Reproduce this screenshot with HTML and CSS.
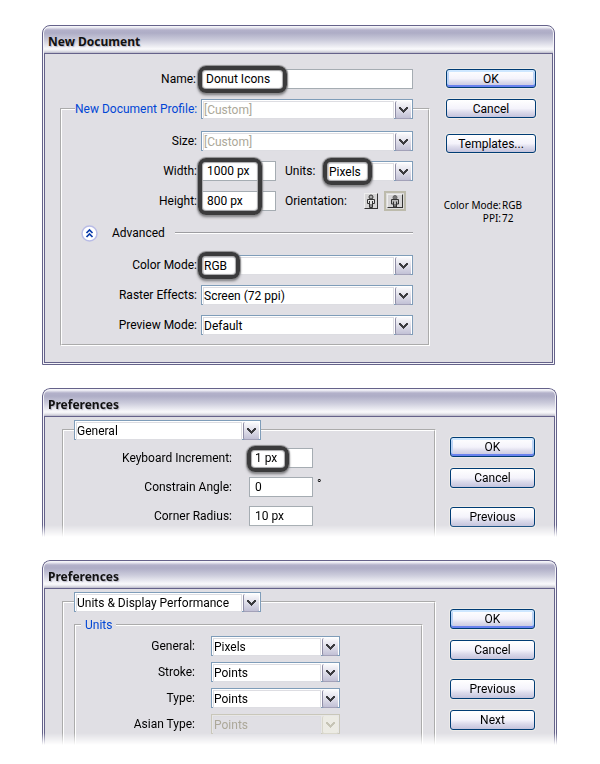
FILE: index.html
```html
<!DOCTYPE html>
<html lang="en">
<head>
<meta charset="utf-8">
<title>Document settings</title>
<link rel="stylesheet" href="styles.css">
</head>
<body>
<svg class="defs" aria-hidden="true">
  <symbol id="chevron" viewBox="0 0 9 6"><path d="M0 0h2v1h1v1h1v1h1V2h1V1h1V0h2v2H8v1H7v1H6v1H5v1H4V5H3V4H2V3H1V2H0z"/></symbol>
</svg>

<section class="window window-new">
  <h2 class="title">New Document</h2>
  <form class="body">
    <div class="main">
      <div class="row row-name">
        <label for="name">Name:</label>
        <span class="field grow"><input id="name" type="text" value="Donut Icons"><i class="ring ring-name"></i></span>
      </div>
      <fieldset class="group group-profile">
        <legend>
          <span class="row">
            <label class="blue" for="profile">New Document Profile:</label>
            <span class="combo grow dim"><select id="profile"><option>[Custom]</option></select><span class="drop"><svg><use href="#chevron"/></svg></span></span>
          </span>
        </legend>
        <div class="row">
          <label for="size">Size:</label>
          <span class="combo grow dim"><select id="size"><option>[Custom]</option></select><span class="drop"><svg><use href="#chevron"/></svg></span></span>
        </div>
        <div class="row">
          <label for="width">Width:</label>
          <span class="field small"><input id="width" type="text" value="1000 px"><i class="ring ring-size"></i></span>
          <label class="side" for="units">Units:</label>
          <span class="combo grow"><select id="units"><option>Pixels</option></select><span class="drop"><svg><use href="#chevron"/></svg></span><i class="ring ring-units"></i></span>
        </div>
        <div class="row">
          <label for="height">Height:</label>
          <span class="field small"><input id="height" type="text" value="800 px"></span>
          <span class="side orient">Orientation:</span>
          <button type="button" class="page" aria-label="Portrait">
            <svg viewBox="0 0 12 14"><circle cx="6" cy="3" r="2" fill="#aaa" stroke="#333"/><path d="M2.500 5.500h7v4h-2v4h-3v-4h-2z" fill="#e4e4e4" stroke="#333"/><path d="M4.500 7v3M7.500 7v3M6 10v3" stroke="#333"/></svg>
          </button>
          <button type="button" class="page wide" aria-label="Landscape">
            <svg viewBox="0 0 14 12"><circle cx="7" cy="2.500" r="2" fill="#777" stroke="#666"/><path d="M3.500 9V4.500h7V9h-2v3h-3V9z" fill="#bbb" stroke="#333"/><path d="M5.500 6.500v3M8.500 6.500v3M7 9v3" stroke="#333"/></svg>
          </button>
        </div>
        <div class="advanced">
          <button type="button" class="toggle" aria-label="Collapse advanced">
            <svg viewBox="0 0 17 17"><circle cx="8.500" cy="8.500" r="7.500" fill="#fff" stroke="#b9bce6" stroke-width="1.500"/><path d="M5.500 8l3-3 3 3M5.500 12l3-3 3 3" fill="none" stroke="#0a3cab" stroke-width="1.700"/></svg>
          </button>
          <span>Advanced</span>
          <hr>
        </div>
        <div class="row">
          <label for="color">Color Mode:</label>
          <span class="combo grow"><select id="color"><option>RGB</option></select><span class="drop"><svg><use href="#chevron"/></svg></span><i class="ring ring-rgb"></i></span>
        </div>
        <div class="row">
          <label for="raster">Raster Effects:</label>
          <span class="combo grow"><select id="raster"><option>Screen (72 ppi)</option></select><span class="drop"><svg><use href="#chevron"/></svg></span></span>
        </div>
        <div class="row">
          <label for="preview">Preview Mode:</label>
          <span class="combo grow"><select id="preview"><option>Default</option></select><span class="drop"><svg><use href="#chevron"/></svg></span></span>
        </div>
      </fieldset>
    </div>
    <div class="actions">
      <button type="button" class="btn primary">OK</button>
      <button type="button" class="btn">Cancel</button>
      <button type="button" class="btn apart">Templates...</button>
      <dl class="info">
        <dt>Color Mode:</dt><dd>RGB</dd>
        <dt>PPI:</dt><dd>72</dd>
      </dl>
    </div>
  </form>
</section>

<section class="window cut">
  <h2 class="title">Preferences</h2>
  <form class="body">
    <fieldset class="group open">
      <legend>
        <span class="combo section"><select aria-label="Section"><option>General</option></select><span class="drop"><svg><use href="#chevron"/></svg></span></span>
      </legend>
      <div class="row">
        <label for="key">Keyboard Increment:</label>
        <span class="field short"><input id="key" type="text" value="1 px"><i class="ring ring-key"></i></span>
      </div>
      <div class="row">
        <label for="angle">Constrain Angle:</label>
        <span class="field short"><input id="angle" type="text" value="0"></span>
        <span class="degree">°</span>
      </div>
      <div class="row">
        <label for="radius">Corner Radius:</label>
        <span class="field short"><input id="radius" type="text" value="10 px"></span>
      </div>
    </fieldset>
    <div class="actions">
      <button type="button" class="btn primary">OK</button>
      <button type="button" class="btn">Cancel</button>
      <button type="button" class="btn apart">Previous</button>
    </div>
  </form>
</section>

<section class="window cut">
  <h2 class="title">Preferences</h2>
  <form class="body">
    <fieldset class="group open">
      <legend>
        <span class="combo section"><select aria-label="Section"><option>Units &amp; Display Performance</option></select><span class="drop"><svg><use href="#chevron"/></svg></span></span>
      </legend>
      <fieldset class="group open units">
        <legend class="blue">Units</legend>
        <div class="row">
          <label for="general">General:</label>
          <span class="combo unit"><select id="general"><option>Pixels</option></select><span class="drop"><svg><use href="#chevron"/></svg></span></span>
        </div>
        <div class="row">
          <label for="stroke">Stroke:</label>
          <span class="combo unit"><select id="stroke"><option>Points</option></select><span class="drop"><svg><use href="#chevron"/></svg></span></span>
        </div>
        <div class="row">
          <label for="type">Type:</label>
          <span class="combo unit"><select id="type"><option>Points</option></select><span class="drop"><svg><use href="#chevron"/></svg></span></span>
        </div>
        <div class="row">
          <label for="asian">Asian Type:</label>
          <span class="combo unit off"><select id="asian" disabled><option>Points</option></select><span class="drop"><svg><use href="#chevron"/></svg></span></span>
        </div>
      </fieldset>
    </fieldset>
    <div class="actions">
      <button type="button" class="btn primary">OK</button>
      <button type="button" class="btn">Cancel</button>
      <button type="button" class="btn apart">Previous</button>
      <button type="button" class="btn">Next</button>
    </div>
  </form>
</section>
</body>
</html>
```
FILE: styles.css
```css
* { box-sizing: border-box; }

body {
  margin: 0;
  padding: 25px 43px 17px 42px;
  background: #fff;
  color: #000;
  font: 12px/16px Roboto, "Noto Sans", sans-serif;
}

input, select, button { font: inherit; color: inherit; margin: 0; }
.defs { position: absolute; width: 0; height: 0; }

/* Window frame */
.window {
  border: 1px solid #65628a;
  border-radius: 8px 8px 0 0;
  padding: 1px;
  background: #f4f4f8;
  margin-bottom: 23px;
}
.window-new { margin-right: 2px; }
.cut {
  border-bottom: 0;
  padding-bottom: 0;
  mask-image: linear-gradient(to top, transparent, #000 12px);
}
.title {
  margin: 0;
  height: 27px;
  padding: 7px 4px 0;
  border-bottom: 1px solid #65628a;
  border-radius: 6px 6px 0 0;
  background: linear-gradient(#f4f4f9 0, #b3b1ca 3px, #aeadc6 6px, #cbcbdb 13px, #fafafc 22px, #e4e4ea 24px, #b9b8c8 26px);
  color: #111;
  font: bold 12px/16px "Noto Sans", sans-serif;
  text-shadow: 1px 1px 1px #b9b8c8;
}
.body {
  display: flex;
  border: 1px solid #65628a;
  border-top: 0;
  background: #e0dfe4;
}
.window-new .body { padding: 15px 16px 16px 15px; gap: 16px; }
.cut .body { border-bottom: 0; padding: 3px 19px 0 17px; gap: 14px; }
.main { flex: 1; }

/* Groups and rows */
.group {
  flex: 1;
  min-width: 0;
  margin: 0;
  padding: 0;
  border: 2px groove #fff;
}
.group legend { padding: 0; }
.row { display: flex; align-items: center; height: 20px; }
.row label { flex: none; text-align: right; white-space: nowrap; }
.row > label:first-child { width: 139px; padding-right: 4px; }
.grow { flex: 1; }
.blue { color: #0046d5; }

.row-name { margin: 0 17px 10px 1px; }
.group-profile { padding: 12px 15px 9px 0; }
.group-profile legend { margin-left: 13px; width: calc(100% - 13px); }
.group-profile legend .row > label:first-child { width: 126px; }
.group-profile > .row + .row { margin-top: 10px; }
.row .side { width: 50px; padding-left: 9px; text-align: left; }
.row .orient { width: 88px; white-space: nowrap; }

.advanced { display: flex; align-items: center; height: 44px; padding-left: 19px; }
.advanced span { margin: 0 10px 0 14px; }
.advanced hr { flex: 1; margin: 0; border: 0; border-top: 1px solid #9d9da1; border-bottom: 1px solid #fff; }

/* Text fields */
.field { position: relative; display: flex; height: 20px; }
.field input {
  width: 100%;
  min-width: 0;
  padding: 0 5px;
  border: 1px solid #a5acb2;
  border-radius: 0;
  background: #fff;
}
.small { width: 75px; }
.short { width: 64px; }

/* Drop-downs */
.combo {
  position: relative;
  display: grid;
  height: 20px;
  padding: 1px;
  border: 1px solid #7f9db9;
  background: #fff;
}
.combo select, .drop { grid-area: 1 / 1; }
.combo select {
  appearance: none;
  min-width: 0;
  margin-right: 17px;
  padding: 0;
  border: 1px solid #dddde2;
  border-radius: 0;
  background: #fff;
}
.dim select { color: #aca899; }
.drop {
  justify-self: end;
  display: grid;
  place-items: center;
  width: 16px;
  border-left: 1px solid #8f8da6;
  border-bottom: 1px solid #a3a1b8;
  border-radius: 2px;
  background: linear-gradient(#fbfbfd, #e2e1eb 45%, #c2c1d6);
  pointer-events: none;
}
.drop svg { width: 9px; height: 6px; fill: #3b3b3f; }
.off { border-color: #c9c7ba; background: #e8e7e6; }
.off select { background: #e0dfe4; color: #aca899; opacity: 1; }
.off .drop { background: #ecebe4; border-color: #d8d6ca; }
.off .drop svg { fill: #c6c4b5; }

/* Emphasis rings over fields */
.ring {
  position: absolute;
  z-index: 1;
  border: 4px solid #3b3b3c;
  border-radius: 8px;
  box-shadow: 0 0 1px 1px #8c8c8e, inset 0 0 1px 1px #a8a8aa, 0 2px 3px #77777a;
  pointer-events: none;
}
.ring-name { left: -2px; top: -3px; width: 89px; height: 27px; }
.ring-size { left: -3px; top: -3px; width: 64px; height: 57px; }
.ring-units { left: -4px; top: -4px; width: 49px; height: 27px; }
.ring-rgb { left: -4px; top: -4px; width: 42px; height: 27px; }
.ring-key { left: -2px; top: -2px; width: 42px; height: 26px; }

/* Buttons */
.actions { display: flex; flex-direction: column; gap: 11px; width: 90px; }
.btn {
  height: 20px;
  padding: 0;
  border: 1px solid #003c74;
  border-radius: 3px;
  background: linear-gradient(#fff, #f4f3fb 50%, #dddcec 70%, #c4c3dc);
  box-shadow: 0 0 0 1px #eceae8;
  line-height: 16px;
}
.primary { box-shadow: 0 0 0 1px #eceae8, inset 0 2px #cee7ff, inset 0 -2px #6982ee, inset 2px 0 #bcd4f6, inset -2px 0 #bcd4f6; }
.window-new .btn { height: 19px; }
.window-new .apart { margin-top: 5px; }
.cut .actions { width: 85px; padding-top: 17px; }
.cut .apart { margin-top: 8px; }

.toggle { width: 17px; height: 17px; padding: 0; border: 0; background: none; }
.toggle svg { display: block; }
.page {
  width: 14px;
  height: 16px;
  padding: 0;
  border: 1px solid #eee;
  border-right-color: #333;
  border-bottom-color: #333;
  background: #d6d5d6;
}
.page svg { display: block; width: 100%; height: 100%; }
.wide {
  width: 16px;
  height: 14px;
  margin-left: 9px;
  box-shadow: 0 0 0 1px #dddcdc, 0 0 0 3px #bdbbac;
}

.info {
  display: grid;
  grid-template-columns: 55px 1fr;
  column-gap: 1px;
  margin: 35px 0 0;
  font: 10px/13px "Noto Sans", sans-serif;
}
.info dt { justify-self: end; white-space: nowrap; }
.info dd { margin: 0; }

/* Preferences windows */
.open { border-bottom: 0; }
.cut .group > legend { margin-left: 10px; }
.section { width: 187px; }
.open > .row > label:first-child { width: 185px; padding-right: 17px; }
.open > .row { margin-top: 8px; }
.open > .row + .row { margin-top: 9px; }
.open { padding-bottom: 11px; }
.degree { align-self: start; margin-left: 4px; line-height: 14px; }
.cut .units { margin: 5px 11px 0 10px; }
.cut .units > legend { padding: 0 4px; margin-left: 5px; }
.units > .row > label:first-child { width: 135px; padding-right: 16px; }
.units > .row { margin-top: 3px; }
.units > .row + .row { margin-top: 6px; }
.unit { width: 129px; }
.cut .group:has(.units) { padding-bottom: 0; }
```
